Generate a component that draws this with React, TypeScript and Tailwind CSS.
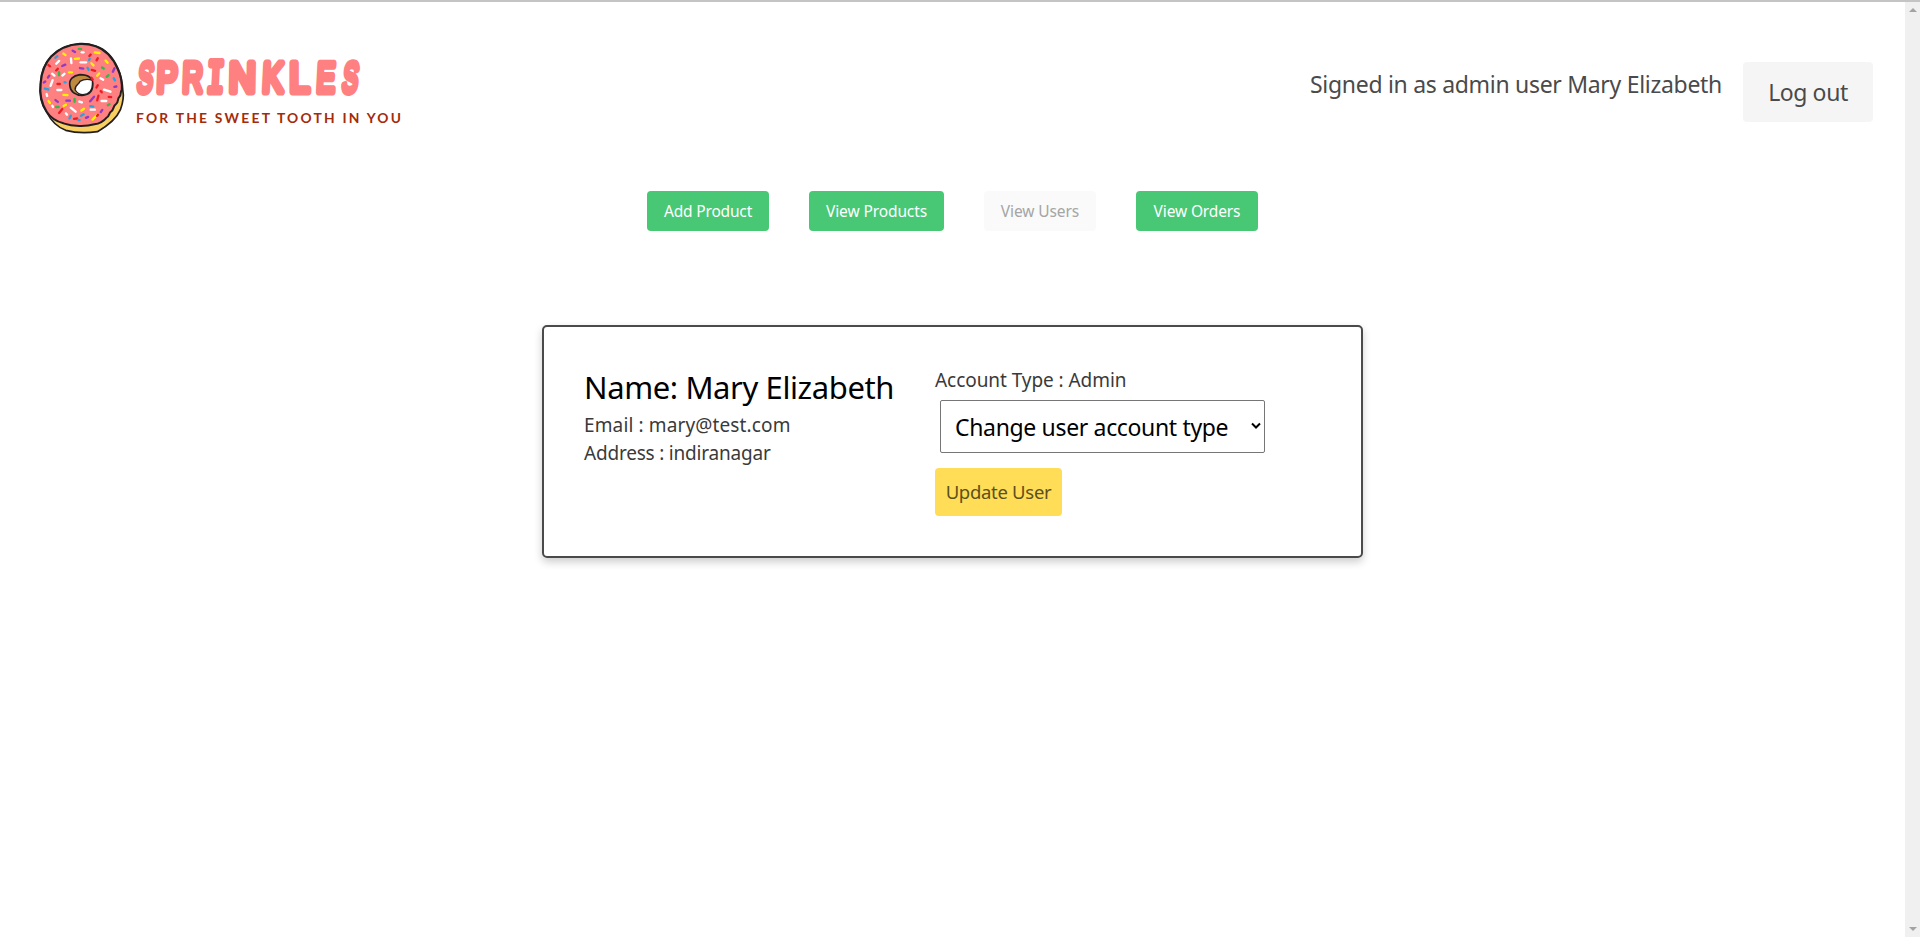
import React from "react";

type Sprinkle = [number, number, number, string, number?];

const R = "#ed1c24";
const W = "#ffffff";
const P = "#8e3bc7";
const G = "#39b54a";
const B = "#29a3e0";
const Y = "#fff200";

// x, y, angle, colour, length
const sprinkles: Sprinkle[] = [
  [132, 64, 30, P, 8], [150, 57, 5, G, 7], [158, 67, 0, W, 5], [201, 68, 8, Y, 14],
  [80, 81, -40, B, 8], [104, 73, 35, Y, 8], [84, 97, -45, W, 12], [59, 107, 40, R, 6],
  [102, 106, -25, P, 10], [124, 92, 85, W, 14], [141, 86, -5, Y, 12], [180, 76, -50, R, 6],
  [160, 97, 0, W, 16], [178, 88, -60, B, 4], [201, 88, -60, R, 7], [187, 103, 45, Y, 9],
  [229, 95, 50, Y, 9], [155, 115, 10, P, 10], [174, 116, 60, B, 7], [190, 121, 15, R, 10],
  [218, 114, 30, G, 6], [250, 120, -65, P, 11], [122, 127, 0, Y, 8], [82, 119, -45, R, 7],
  [71, 134, 40, W, 9], [88, 131, 90, G, 9], [101, 134, -40, W, 8], [57, 140, -55, P, 7],
  [204, 134, -50, Y, 9], [186, 146, 55, R, 6], [215, 147, 30, W, 9], [232, 138, -40, G, 7],
  [252, 148, 60, B, 7], [45, 156, -30, P, 5], [66, 159, -70, W, 18], [87, 162, 0, R, 7],
  [106, 157, 10, B, 3], [201, 169, -60, R, 8], [231, 182, 18, W, 20], [255, 170, -10, P, 6],
  [51, 177, 15, B, 11], [89, 180, 0, W, 12], [52, 195, 75, W, 6], [107, 195, 5, Y, 12],
  [59, 216, 55, Y, 7], [81, 213, 40, P, 9], [115, 212, 0, P, 10], [134, 211, 90, G, 8],
  [152, 216, 20, W, 8], [186, 207, -50, P, 18], [203, 204, -75, R, 14], [221, 213, 0, W, 14],
  [239, 201, 5, R, 7], [83, 231, 0, G, 8], [69, 229, 60, W, 4], [93, 243, -50, R, 15],
  [105, 226, -30, Y, 8], [130, 239, 40, W, 19], [158, 239, -35, Y, 9], [185, 229, 10, B, 9],
  [188, 239, 0, W, 12], [214, 243, -55, P, 8], [235, 224, -30, G, 6], [121, 261, -65, B, 9],
  [110, 252, 50, W, 5], [137, 266, -5, R, 9], [157, 255, -30, B, 9], [171, 262, -25, P, 7],
  [194, 262, -45, Y, 19], [202, 256, -45, R, 4], [147, 270, 5, B, 4], [213, 185, 50, R, 5],
];

// glyph, left edge, horizontal scale, slant
const letters: [string, number, number, number][] = [
  ["S", 12.2, 0.55, 7],
  ["P", 32.2, 0.74, 2],
  ["R", 58, 0.67, 2],
  ["I", 82.2, 0.68, 3],
  ["N", 104.8, 0.88, 1],
  ["K", 137.8, 0.75, 3],
  ["L", 165.4, 0.86, 0],
  ["E", 192, 0.66, 3],
  ["S", 217.2, 0.55, 7],
];

function Donut() {
  return (
    <svg viewBox="2 0 326 345" preserveAspectRatio="none" className="h-[115px] w-[110px] shrink-0" aria-hidden="true">
      <path
        d="M150 41C110 43 85 57 64 79C42 103 35 130 33 158C29 190 34 222 51 246C63 270 82 291 108 301C140 310 175 309 202 305C233 287 259 265 270 239C279 214 280 195 277 181C276 160 272 136 263 116C249 83 226 58 197 48C182 43 166 40 150 41Z"
        fill="#f9cf61" stroke="#231f20" strokeWidth="5"
      />
      <path
        d="M150 42C110 44 86 58 65 80C43 104 36 130 34 158C30 190 36 221 52 246C62 262 80 274 101 280C130 290 168 290 193 283C211 281 220 274 229 263C238 260 235 248 243 244C251 239 247 229 257 222C266 215 260 206 267 200C274 194 268 187 274 180C275 159 271 136 262 117C248 84 225 59 197 49C182 44 166 41 150 42Z"
        fill="#ff8080" stroke="#231f20" strokeWidth="6" strokeLinejoin="round"
      />
      <path d="M150 134C130 137 117 148 120 166C122 186 137 196 157 196C176 195 188 184 188 163C188 143 176 134 150 134Z" fill="#c08a3e" stroke="#231f20" strokeWidth="5" />
      <path d="M187 151C175 147 162 147 150 154C149 163 133 165 136 180C143 191 149 194 159 194C178 193 187 181 187 163Z" fill="#fff" stroke="#231f20" strokeWidth="4" />
      {sprinkles.map(([x, y, a, c, l = 8], i) => (
        <line key={i} x1={x - l / 2} x2={x + l / 2} y1={y} y2={y} transform={`rotate(${a} ${x} ${y})`} stroke={c} strokeWidth="7" strokeLinecap="round" />
      ))}
    </svg>
  );
}

function Wordmark() {
  return (
    <svg viewBox="0 0 290 100" className="mt-[10px] -ml-4 h-[100px] w-[290px] shrink-0">
      <g fontWeight="400" fontSize="42" fill="#ff8080" stroke="#ff8080" strokeWidth="7" strokeLinejoin="round" strokeLinecap="round">
        {letters.map(([c, x, s, r], i) => (
          <text
            key={i}
            fontFamily={c === "I" ? "'DejaVu Sans Mono', monospace" : "'Liberation Sans', sans-serif"}
            transform={`translate(${x} 51.5) skewX(${-r}) scale(${s} 1)`}
          >
            {c}
          </text>
        ))}
      </g>
      <text x="12" y="83" fontFamily="Lato, sans-serif" fontWeight="700" fontSize="13.8" fill="#a52a0a" textLength="265">FOR THE SWEET TOOTH IN YOU</text>
    </svg>
  );
}

const green = "h-10 rounded bg-[#48c774] pt-0.5 text-[15.5px] text-white";

export default function App() {
  return (
    <div className="flex h-[937px] w-[1920px] overflow-hidden bg-white font-['Noto_Sans',sans-serif] text-[#4a4a4a]">
      <div className="flex w-[1905px] flex-col items-center border-t-2 border-[#c4c4c4]">
        <header className="flex h-[189px] w-full items-start justify-between pr-8 pl-[30px]">
          <div className="flex pt-7">
            <Donut />
            <Wordmark />
          </div>
          <div className="flex pt-[60px]">
            <span className="mt-1 mr-5 w-[413px] text-[23px] leading-9 tracking-[-0.3px] whitespace-nowrap">Signed in as admin user Mary Elizabeth</span>
            <button className="h-[60px] w-[130px] rounded bg-[#f5f5f5] text-[23px] tracking-[-0.4px]">Log out</button>
          </div>
        </header>
        <nav className="flex gap-10">
          <button className={`w-[122px] tracking-[-0.17px] ${green}`}>Add Product</button>
          <button className={`w-[135px] tracking-[-0.1px] ${green}`}>View Products</button>
          <button className="h-10 w-[112px] rounded bg-[#fafafa] pt-0.5 text-[15.5px] tracking-[-0.1px] text-[#a5a5a5]" disabled>View Users</button>
          <button className={`w-[122px] tracking-[-0.13px] ${green}`}>View Orders</button>
        </nav>
        <section className="mt-[94px] flex h-[233px] w-[821px] rounded-[5px] border-2 border-[#4a4a4a] px-10 pt-10 shadow-[0_4px_8px_0_rgba(0,0,0,0.2)]">
          <div className="w-[351px] whitespace-nowrap">
            <h1 className="text-[31px] leading-[40px] tracking-[-0.4px] text-black">Name: Mary Elizabeth</h1>
            <p className="mt-1 text-[19px] leading-7 tracking-[0.13px] text-[#3a3a3a]">Email : mary@test.com</p>
            <p className="text-[19px] leading-7 tracking-[-0.2px] text-[#3a3a3a]">Address : indiranagar</p>
          </div>
          <div className="flex flex-col items-start whitespace-nowrap">
            <p className="-mt-px text-[19px] leading-7 tracking-[-0.06px] text-[#3a3a3a]">Account Type : Admin</p>
            <button className="mt-[6px] ml-[5px] flex h-[53px] w-[325px] items-center justify-between rounded-[2px] border border-[#767676] pr-[3px] pl-[14px] text-[23px] tracking-[-0.34px] text-black">
              <span className="pt-0.5">Change user account type</span>
              <svg viewBox="0 0 10 8" className="mb-px h-2 w-[10px]"><path d="M1 1.5 5 5.5 9 1.5" fill="none" stroke="#000" strokeWidth="2" /></svg>
            </button>
            <button className="mt-[15px] h-12 w-[127px] rounded bg-[#ffdd57] text-[18.5px] tracking-[-0.3px] text-[#5c5020]">Update User</button>
          </div>
        </section>
      </div>
      <div className="flex w-[15px] flex-col items-center justify-between border-t-2 border-[#c4c4c4] bg-[#f0f0f0] pt-[6px] pb-[6px]">
        <svg viewBox="0 0 8 4" className="h-1 w-2"><path d="M0 4 4 0 8 4Z" fill="#a3a3a3" /></svg>
        <svg viewBox="0 0 8 4" className="h-1 w-2"><path d="M0 0 4 4 8 0Z" fill="#a3a3a3" /></svg>
      </div>
    </div>
  );
}
